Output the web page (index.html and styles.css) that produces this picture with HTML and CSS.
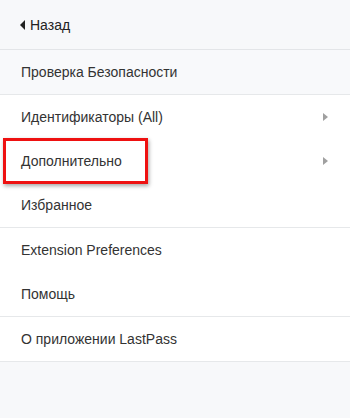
FILE: index.html
```html
<!DOCTYPE html>
<html lang="ru">
<head>
  <meta charset="UTF-8">
  <title>Меню</title>
  <link rel="stylesheet" href="styles.css">
</head>
<body>
  <div class="header">
    <a class="back" href="#"><span class="back-arrow"></span>Назад</a>
  </div>

  <div class="group first">
    <div class="item">Проверка Безопасности</div>
  </div>

  <div class="group">
    <div class="item more">Идентификаторы (All)</div>
    <div class="item more marked">Дополнительно</div>
    <div class="item">Избранное</div>
  </div>

  <div class="group">
    <div class="item">Extension Preferences</div>
    <div class="item">Помощь</div>
  </div>

  <div class="group">
    <div class="item">О приложении LastPass</div>
  </div>
</body>
</html>
```

FILE: styles.css
```css
body {
  margin: 0;
  height: 418px;
  background: #f7f8fa;
  font-family: "Liberation Sans", Arial, sans-serif;
  font-size: 14px;
  color: #333;
}

.header {
  height: 49px;
  display: flex;
  align-items: center;
  padding-left: 20px;
  border-bottom: 1px solid #e3e5e8;
}

.back {
  color: #222;
  text-decoration: none;
  display: flex;
  align-items: center;
}

.back-arrow {
  width: 0;
  height: 0;
  border-top: 5px solid transparent;
  border-bottom: 5px solid transparent;
  border-right: 5px solid #222;
  margin-right: 5px;
}

.group {
  background: #fff;
  border-bottom: 1px solid #e6e8ea;
}

.group.first {
  background: #f8f9fb;
}

.item {
  height: 44px;
  display: flex;
  align-items: center;
  padding-left: 21px;
  position: relative;
}

.item.more::after {
  content: '';
  position: absolute;
  right: 22px;
  top: 18px;
  border-top: 4px solid transparent;
  border-bottom: 4px solid transparent;
  border-left: 5px solid #a0a0a0;
}

.item.marked::before {
  content: '';
  position: absolute;
  left: 3px;
  top: -1px;
  width: 139px;
  height: 40px;
  border: 3px solid #ee1111;
  box-shadow: 1px 2px 4px rgba(0, 0, 0, 0.35);
}
```
